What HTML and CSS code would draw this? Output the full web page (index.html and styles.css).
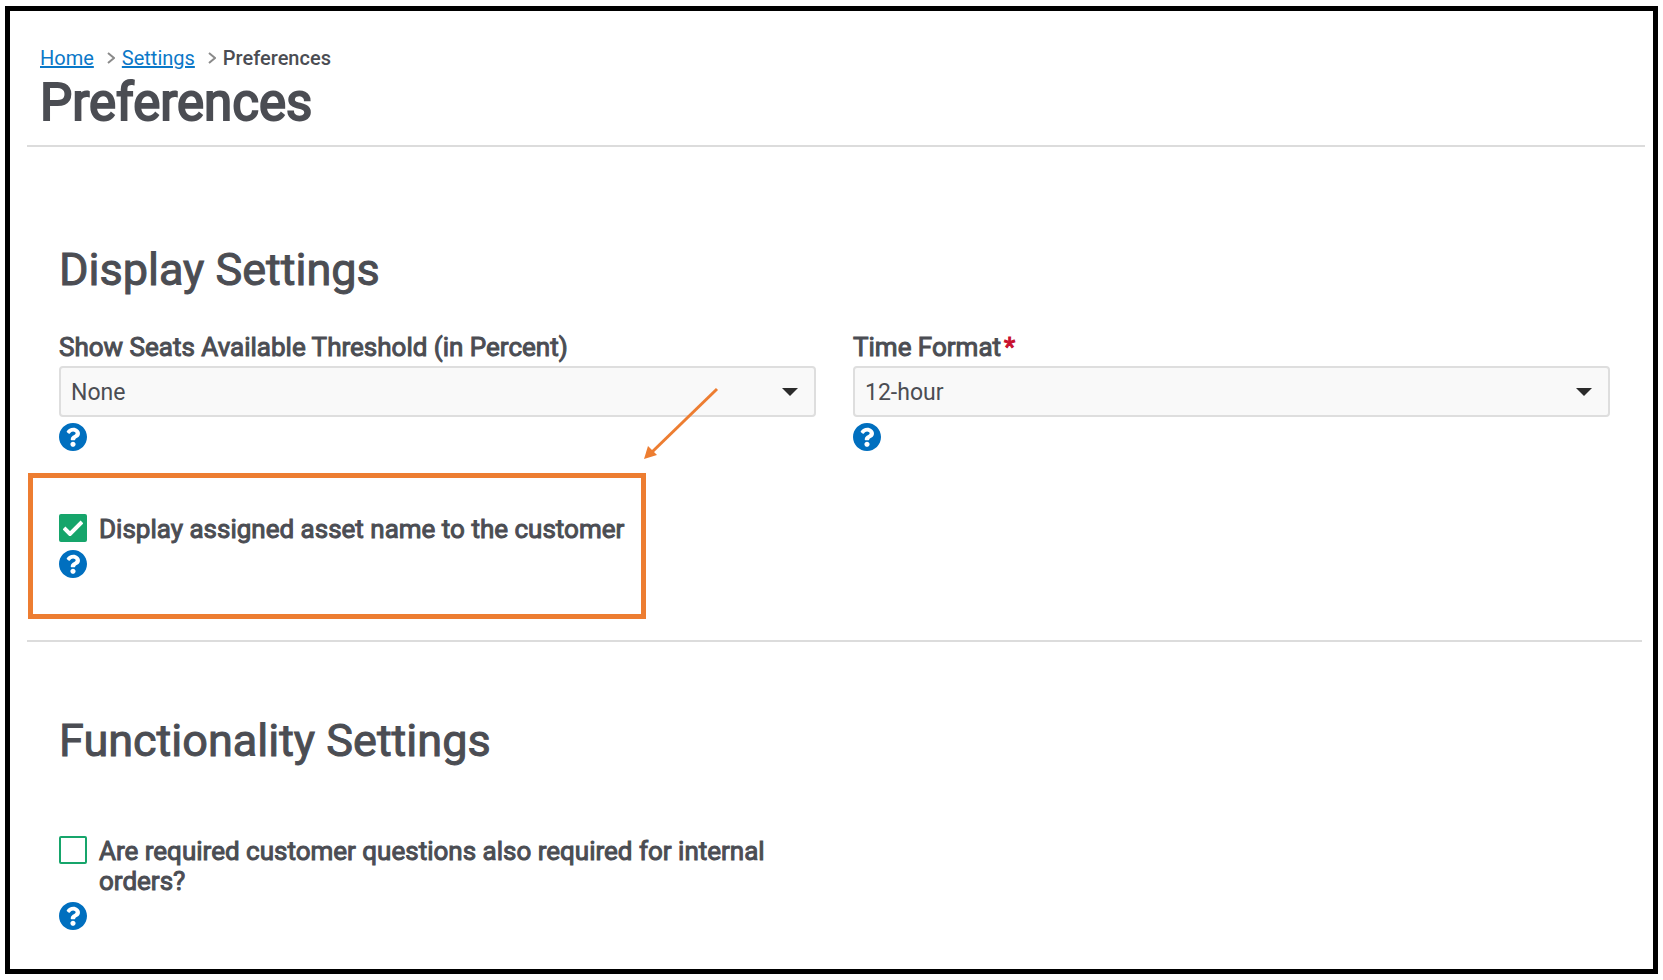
FILE: index.html
```html
<!DOCTYPE html>
<html lang="en">
<head>
  <meta charset="utf-8">
  <title>Preferences</title>
  <link rel="stylesheet" href="styles.css">
</head>
<body>
  <svg class="sprite" aria-hidden="true">
    <symbol id="icon-help" viewBox="8 8 496 496">
      <path d="M504 256c0 136.997-111.043 248-248 248S8 392.997 8 256C8 119.083 119.043 8 256 8s248 111.083 248 248zM262.655 90c-54.497 0-89.255 22.957-116.549 63.758-3.536 5.286-2.353 12.415 2.715 16.258l34.699 26.31c5.205 3.947 12.621 3.008 16.665-2.122 17.864-22.658 30.113-35.797 57.303-35.797 20.429 0 45.698 13.148 45.698 32.958 0 14.976-12.363 22.667-32.534 33.976C247.128 238.528 216 254.941 216 296v4c0 6.627 5.373 12 12 12h56c6.627 0 12-5.373 12-12v-1.333c0-28.462 83.186-29.647 83.186-106.667 0-58.002-60.165-102-116.531-102zM256 338c-25.365 0-46 20.635-46 46 0 25.364 20.635 46 46 46s46-20.636 46-46c0-25.365-20.635-46-46-46z"/>
    </symbol>
    <symbol id="icon-caret" viewBox="0 0 16 8"><path d="M0 0h16L8 8z"/></symbol>
    <symbol id="icon-chevron" viewBox="0 0 8 12"><path d="M1 1l6 5-6 5" fill="none" stroke="currentColor" stroke-width="2"/></symbol>
    <symbol id="icon-check" viewBox="0 0 20 16"><path d="M1 8l6 6L19 2" fill="none" stroke="currentColor" stroke-width="4"/></symbol>
  </svg>

  <div class="frame">
    <header class="page-header">
      <nav class="breadcrumbs" aria-label="Breadcrumb">
        <a href="#home">Home</a>
        <svg class="crumb-sep" aria-hidden="true"><use href="#icon-chevron"/></svg>
        <a href="#settings">Settings</a>
        <svg class="crumb-sep" aria-hidden="true"><use href="#icon-chevron"/></svg>
        <span class="current" aria-current="page">Preferences</span>
      </nav>
      <h1 class="page-title">Preferences</h1>
    </header>

    <main class="content">
      <section class="section section-display">
        <h2 class="section-title">Display Settings</h2>
        <div class="fields">
          <div class="field">
            <label class="label" for="threshold">Show Seats Available Threshold (in Percent)</label>
            <div class="select-wrap">
              <select class="select" id="threshold"><option>None</option></select>
              <svg class="caret" aria-hidden="true"><use href="#icon-caret"/></svg>
            </div>
            <button class="help" type="button" aria-label="Help"><svg aria-hidden="true"><use href="#icon-help"/></svg></button>
          </div>
          <div class="field">
            <label class="label" for="time-format">Time Format<span class="required">*</span></label>
            <div class="select-wrap">
              <select class="select" id="time-format"><option>12-hour</option></select>
              <svg class="caret" aria-hidden="true"><use href="#icon-caret"/></svg>
            </div>
            <button class="help" type="button" aria-label="Help"><svg aria-hidden="true"><use href="#icon-help"/></svg></button>
          </div>
        </div>

        <div class="highlight">
          <div class="check-row">
            <span class="check-box">
              <input class="checkbox" type="checkbox" id="asset-name" checked>
              <svg class="tick" aria-hidden="true"><use href="#icon-check"/></svg>
            </span>
            <label class="label" for="asset-name">Display assigned asset name to the customer</label>
          </div>
          <button class="help" type="button" aria-label="Help"><svg aria-hidden="true"><use href="#icon-help"/></svg></button>
          <svg class="pointer" viewBox="0 0 76 74" aria-hidden="true">
            <path class="pointer-line" d="M74 2L8 66"/>
            <path class="pointer-head" d="M1 72L5 59L14 68Z"/>
          </svg>
        </div>
      </section>

      <section class="section section-functionality">
        <h2 class="section-title">Functionality Settings</h2>
        <div class="fields fields-checks">
          <div class="field">
            <div class="check-row">
              <span class="check-box">
                <input class="checkbox" type="checkbox" id="questions">
              </span>
              <label class="label" for="questions">Are required customer questions also required for internal orders?</label>
            </div>
            <button class="help" type="button" aria-label="Help"><svg aria-hidden="true"><use href="#icon-help"/></svg></button>
          </div>
        </div>
      </section>
    </main>
  </div>
</body>
</html>
```
FILE: styles.css
```css
* {
  box-sizing: border-box;
}

body {
  margin: 0;
  padding: 6px 5px;
  min-height: 100vh;
  display: flex;
  background: #fff;
  color: #4b4d53;
  font-family: Roboto, "Liberation Sans", sans-serif;
}

.sprite {
  position: absolute;
  width: 0;
  height: 0;
}

.frame {
  flex: 1;
  border: 5px solid #000;
}

.page-header {
  margin: 0 8px 0 17px;
  padding: 35px 13px 12px;
  border-bottom: 2px solid #dcdcdc;
}

.breadcrumbs {
  display: flex;
  align-items: center;
  font-size: 20px;
  line-height: 24px;
}

.breadcrumbs a {
  color: #0b78c8;
  text-decoration: underline;
}

.crumb-sep {
  width: 8px;
  height: 12px;
  margin: 0 7px 0 13px;
  color: #8a8a8a;
}

.current {
  font-weight: 500;
}

.page-title {
  margin: 3px 0 0;
  font-size: 51px;
  font-weight: 400;
  line-height: 60px;
  -webkit-text-stroke: 2px currentColor;
}

.content {
  margin: 0 11px 0 17px;
}

.section {
  padding: 0 32px;
}

.section-display {
  padding-top: 95px;
  padding-bottom: 21px;
  border-bottom: 2px solid #dcdcdc;
}

.section-functionality {
  padding-top: 71px;
}

.section-title {
  margin: 0;
  font-size: 45px;
  font-weight: 400;
  line-height: 56px;
  -webkit-text-stroke: 1px currentColor;
}

.fields {
  display: grid;
  grid-template-columns: 1fr 1fr;
  column-gap: 37px;
  margin-top: 34px;
}

.fields-checks {
  margin-top: 67px;
}

.field {
  display: flex;
  flex-direction: column;
  align-items: flex-start;
}

.label {
  font-size: 26px;
  font-weight: 400;
  line-height: 30px;
  -webkit-text-stroke: 1px currentColor;
}

.required {
  margin-left: 3px;
  color: #c8102e;
}

.select-wrap {
  position: relative;
  width: 100%;
  margin-top: 4px;
}

.select {
  display: block;
  width: 100%;
  height: 51px;
  padding: 1px 40px 0 10px;
  appearance: none;
  border: 2px solid #dedede;
  border-radius: 4px;
  background: #f9f9f9;
  color: #4b4d53;
  font-family: inherit;
  font-size: 23px;
}

.caret {
  position: absolute;
  top: 22px;
  right: 18px;
  width: 16px;
  height: 8px;
  fill: #2b2b2b;
  pointer-events: none;
}

.help {
  display: block;
  width: 28px;
  height: 28px;
  margin-top: 6px;
  padding: 0;
  border: 0;
  border-radius: 50%;
  background: none;
  color: #006fbf;
}

.help svg {
  display: block;
  width: 28px;
  height: 28px;
  fill: currentColor;
}

.highlight {
  position: relative;
  width: fit-content;
  margin: 22px 0 0 -31px;
  padding: 36px 17px 36px 26px;
  border: 5px solid #ed7d31;
}

.check-row {
  display: flex;
  align-items: flex-start;
  gap: 12px;
}

.check-box {
  position: relative;
  flex: none;
  width: 28px;
  height: 28px;
}

.checkbox {
  display: block;
  width: 28px;
  height: 28px;
  margin: 0;
  appearance: none;
  border: 2px solid #16a56b;
  border-radius: 2px;
  background: #fff;
}

.checkbox:checked {
  background: #16a56b;
}

.tick {
  position: absolute;
  top: 6px;
  left: 4px;
  width: 20px;
  height: 16px;
  color: #fff;
  pointer-events: none;
}

.pointer {
  position: absolute;
  bottom: calc(100% + 17px);
  left: calc(100% + 2px);
  width: 76px;
  height: 74px;
}

.pointer-line {
  fill: none;
  stroke: #ed7d31;
  stroke-width: 3;
}

.pointer-head {
  fill: #ed7d31;
}
```
